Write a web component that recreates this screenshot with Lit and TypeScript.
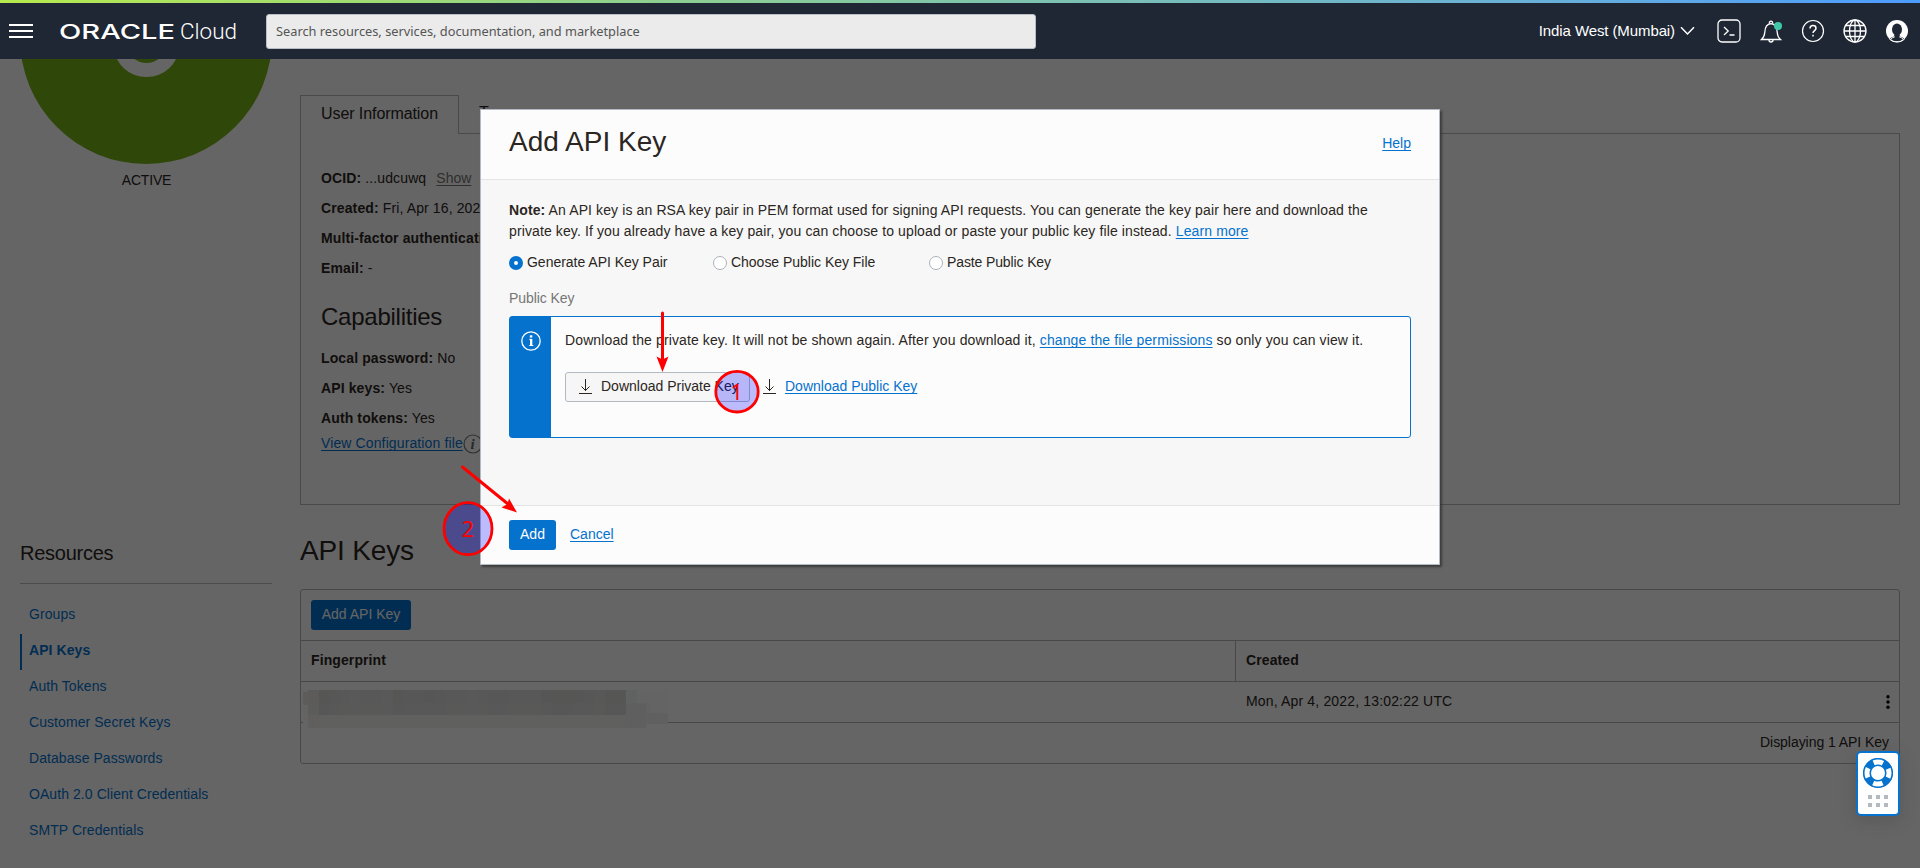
import { LitElement, html, css, svg } from "lit";
import { customElement } from "lit/decorators.js";
import { classMap } from "lit/directives/class-map.js";

const FONT = css`"Liberation Sans", Arial, sans-serif`;

@customElement("top-bar")
class TopBar extends LitElement {
  static styles = css`
    :host { display: block; height: 59px; color: #fff; font-family: ${FONT}; }
    .stripe { height: 3px; background: linear-gradient(90deg, #b6ea4e 0%, #8fd08f 33%, #68b0d8 80%, #4c9cff 100%); }
    .bar { height: 56px; background: #1e2733; display: flex; align-items: center; padding: 0 11px 0 9px; }
    svg { display: block; flex: none; }
    .menu { margin-right: 26px; }
    .logo { margin-right: 26px; }
    .search { width: 759px; height: 33px; border: 1px solid #b9bec6; border-radius: 3px; background: #ebebeb;
      display: flex; align-items: center; padding-left: 9px;
      font: 12.8px "Noto Sans", "Open Sans", sans-serif; color: #555; }
    .region { margin-left: auto; font-size: 15px; letter-spacing: -0.1px; white-space: nowrap; margin-right: 5px; padding-bottom: 1px; }
    .chev { margin-right: 22px; }
    .icons { display: flex; align-items: center; gap: 18px; }
  `;
  render() {
    return html`
      <div class="stripe"></div>
      <div class="bar">
        <svg class="menu" width="24" height="14" viewBox="0 0 24 14" fill="#fff">
          <rect y="0" width="24" height="2" /><rect y="6" width="24" height="2" /><rect y="12" width="24" height="2" />
        </svg>
        <svg class="logo" width="181" height="24" viewBox="0 0 181 24" fill="#fff">
          <text x="0" y="19.900" font-family="Inter, sans-serif" font-size="20.500" font-weight="500" textLength="116" lengthAdjust="spacingAndGlyphs">ORACLE</text>
          <text x="121" y="19.900" font-family="Roboto, sans-serif" font-size="22" font-weight="300" textLength="57" lengthAdjust="spacingAndGlyphs">Cloud</text>
        </svg>
        <div class="search">Search resources, services, documentation, and marketplace</div>
        <span class="region">India West (Mumbai)</span>
        <svg class="chev" width="15" height="10" viewBox="0 0 15 10" fill="none" stroke="#fff" stroke-width="1.500"><path d="M1 1.200 7.500 8 14 1.200" /></svg>
        <div class="icons">
          <svg width="24" height="24" viewBox="0 0 24 24" fill="none" stroke="#fff" stroke-width="1.300">
            <rect x="1" y="1" width="22" height="22" rx="4" /><path d="M7 8 11.200 12 7 16M12.500 16h5" />
          </svg>
          <svg width="24" height="24" viewBox="-1 0 24 24" fill="none" stroke="#fff" stroke-width="1.300">
            <path d="M1.500 20.500c2-1.700 3-3.500 3.300-7.200C5 8 7.500 5 11 4.700c3.500.300 6 3.300 6.200 8.600.3 3.700 1.300 5.500 3.300 7.200zM9.500 4.300a1.600 1.600 0 1 1 3 0M9 21a2 2 0 0 0 4 0" />
            <circle cx="18" cy="7" r="4" fill="#3fc9a9" stroke="none" />
          </svg>
          <svg width="24" height="24" viewBox="0 0 24 24" fill="none" stroke="#fff" stroke-width="1.200">
            <circle cx="12" cy="12" r="10.500" /><path stroke-width="1.500" d="M9 9.600c0-2 1.300-3 3-3s3 1.100 3 2.700c0 2.200-3 2.400-3 4.800M12 15.800v1.800" />
          </svg>
          <svg width="24" height="24" viewBox="0 0 24 24" fill="none" stroke="#fff" stroke-width="1.300">
            <circle cx="12" cy="12" r="11" /><ellipse cx="12" cy="12" rx="5.500" ry="11" />
            <path d="M12 1v22M1 12h22M2.500 6.500h19M2.500 17.500h19" />
          </svg>
          <svg width="24" height="24" viewBox="0 0 24 24">
            <circle cx="12" cy="12" r="11" fill="#fff" />
            <ellipse cx="12" cy="10.500" rx="5" ry="6" fill="#1e2733" />
            <path d="M9.500 15h5l.5 2.500c2 .500 3.200 1.200 4 2.200A11 11 0 0 1 12 22.200a11 11 0 0 1-7-2.500c.8-1 2-1.700 4-2.200z" fill="#1e2733" />
            <path d="M4.500 20.200a11 11 0 0 0 15 0M6 20c1-1.200 2.500-1.700 3.800-2.200M18 20c-1-1.200-2.500-1.700-3.800-2.200" stroke="#fff" stroke-width="1" fill="none"/>
          </svg>
        </div>
      </div>`;
  }
}

@customElement("side-panel")
class SidePanel extends LitElement {
  static styles = css`
    :host { display: block; width: 252px; padding-left: 20px; font: 14px ${FONT}; color: #2b2622; }
    .crop { height: 105px; overflow: hidden; display: flex; align-items: flex-end; }
    .avatar { flex: none; width: 252px; height: 252px; border-radius: 50%; background: #75b116;
      display: flex; justify-content: center; align-items: flex-end; }
    .ring { width: 65px; height: 62px; box-sizing: border-box; border: 14px solid #fcfcfc; border-radius: 50%; margin-bottom: 87px; margin-left: 1px; }
    .state { text-align: center; line-height: 32px; height: 32px; letter-spacing: -0.2px; padding-left: 1px; }
    h2 { margin: 342px 0 0; font-weight: 400; font-size: 20px; line-height: 30px; height: 45px; letter-spacing: -0.25px; border-bottom: 1px solid #b9bec2; }
    .links { padding-top: 14px; display: flex; flex-direction: column; }
    .link { height: 36px; line-height: 32px; color: #0572ce; border-left: 2px solid transparent; padding-left: 7px; box-sizing: border-box; letter-spacing: 0.07px; }
    .link.on { font-weight: 700; border-color: #0572ce; }
  `;
  render() {
    const links = ["Groups", "API Keys", "Auth Tokens", "Customer Secret Keys", "Database Passwords", "OAuth 2.0 Client Credentials", "SMTP Credentials"];
    return html`
      <div class="crop"><div class="avatar"><div class="ring"></div></div></div>
      <div class="state">ACTIVE</div>
      <h2>Resources</h2>
      <div class="links">
        ${links.map((l) => html`<a class=${classMap({ link: true, on: l === "API Keys" })}>${l}</a>`)}
      </div>`;
  }
}

@customElement("user-details")
class UserDetails extends LitElement {
  static styles = css`
    :host { display: block; height: 410px; margin-top: 36px; font: 14px ${FONT}; color: #2b2622; }
    .tabs { display: flex; height: 39px; }
    .tab { font-size: 16px; line-height: 36px; white-space: nowrap; }
    .tab.on { box-sizing: border-box; width: 159px; padding-left: 20px; border: 1px solid #b9b9b9; border-bottom: 0; letter-spacing: -0.08px; }
    .tab.off { flex: 1; padding-left: 20px; box-sizing: border-box; border-bottom: 1px solid #b9b9b9; height: 39px; }
    .panel { box-sizing: border-box; height: 371px; border: 1px solid #b9b9b9; border-top: 0; padding: 29px 20px 0; letter-spacing: 0.12px; }
    .row { height: 30px; line-height: 30px; white-space: nowrap; }
    a { text-decoration: underline 1px; text-underline-offset: 2px; text-decoration-skip-ink: none; }
    .show { color: #767676; margin-left: 6px; letter-spacing: 0; }
    h3 { margin: 16px 0 8px; font-weight: 400; font-size: 24px; line-height: 36px; letter-spacing: -0.25px; }
    .cfg { display: flex; align-items: center; height: 20px; }
    .cfg a { color: #0572ce; line-height: 16px; }
    .cfg svg { display: block; margin-top: 2px; }
  `;
  render() {
    return html`
      <div class="tabs"><div class="tab on">User Information</div><div class="tab off">Tags</div></div>
      <div class="panel">
        <div class="row"><b>OCID:</b> ...udcuwq <a class="show">Show</a></div>
        <div class="row"><b>Created:</b> Fri, Apr 16, 2021</div>
        <div class="row"><b>Multi-factor authentication:</b></div>
        <div class="row"><b>Email:</b> -</div>
        <h3>Capabilities</h3>
        <div class="row"><b>Local password:</b> No</div>
        <div class="row"><b>API keys:</b> Yes</div>
        <div class="row"><b>Auth tokens:</b> Yes</div>
        <div class="cfg"><a>View Configuration file</a>
          <svg width="20" height="20" viewBox="0 0 20 20"><circle cx="10" cy="10" r="9" fill="none" stroke="#777" stroke-width="1.200" />
            <text x="7.500" y="15" font-family="Liberation Serif, serif" font-style="italic" font-weight="700" font-size="15" fill="#666">i</text></svg>
        </div>
      </div>`;
  }
}

@customElement("keys-table")
class KeysTable extends LitElement {
  static styles = css`
    :host { display: block; font: 14px ${FONT}; color: #2b2622; }
    h1 { margin: 24px 0 16px; font-weight: 400; font-size: 28px; line-height: 44px; letter-spacing: -0.15px; }
    .box { border: 1px solid #b0b5b8; border-radius: 3px; height: 173px; display: grid; grid-template-rows: 51px 41px 41px 40px; }
    .r { border-bottom: 1px solid #b0b5b8; display: grid; grid-template-columns: 934px 1fr; box-sizing: border-box; }
    .c { padding-left: 10px; line-height: 38px; }
    .c + .c { border-left: 1px solid transparent; }
    .r.head { font-weight: 700; letter-spacing: 0.1px; }
    .r.head .c + .c { border-left-color: #b0b5b8; }
    .tools { display: block; padding: 10px; }
    .btn { display: inline-block; width: 100px; height: 30px; line-height: 28px; text-align: center; background: #0572ce; color: #fcfcfc; border-radius: 3px; }
    .last { display: flex; justify-content: space-between; padding-right: 9px; align-items: center; letter-spacing: 0.16px; }
    .last span { margin-top: -2px; }
    .foot { text-align: right; padding-right: 10px; line-height: 38px; letter-spacing: -0.05px; }
    .smudge { display: block; margin: 8px 0 0 -8px; overflow: visible; }
    .data .c { height: 40px; }
  `;
  render() {
    const top = [91, 89, 91, 92, 93, 92, 92, 93, 89, 91, 91, 90, 91, 92, 92, 93, 92, 91, 91, 92, 92, 92, 90, 89, 89, 90, 91, 92, 89, 89];
    const g = (n: number) => { const v = Math.round(n * 2.4); return `rgb(${v},${v},${v - 1})`; };
    return html`
      <h1>API Keys</h1>
      <div class="box">
        <div class="r tools"><span class="btn">Add API Key</span></div>
        <div class="r head"><div class="c">Fingerprint</div><div class="c">Created</div></div>
        <div class="r data">
          <div class="c">
            <svg class="smudge" width="366" height="38" viewBox="0 0 366 38" shape-rendering="crispEdges">
              <rect width="365" height="34" y="0" fill="#fafafa" />
              <rect x="0" y="2" width="6" height="13" fill="#e8e6e2" />
              <rect x="5" y="25" width="338" height="13" fill="#efefee" />
              <rect x="333" y="13" width="15" height="20" fill="#f4f4f4" />
              <rect x="322" y="13" width="21" height="25" fill="#ededed" />
              <rect x="343" y="23" width="22" height="11" fill="#f0f0f0" />
              <rect x="322" y="0" width="12" height="13" fill="#f1f3f3" />
              ${top.map((v, i) => svg`<rect x=${5 + i * 10.600} y="0" width="10.800" height="13" fill=${g(v)} /><rect x=${5 + i * 10.600} y="13" width="10.800" height="12" fill=${g(v * 0.5 + 46.500)} />`)}
              <rect x="5" y="0" width="11" height="38" fill="#efeeea" opacity=".5" />
            </svg>
          </div>
          <div class="c last"><span>Mon, Apr 4, 2022, 13:02:22 UTC</span>
            <svg width="4" height="14" viewBox="0 0 4 14" fill="#000"><circle cx="2" cy="1.800" r="1.700" /><circle cx="2" cy="7" r="1.700" /><circle cx="2" cy="12.200" r="1.700" /></svg></div>
        </div>
        <div class="foot">Displaying 1 API Key</div>
      </div>`;
  }
}

@customElement("api-key-dialog")
class ApiKeyDialog extends LitElement {
  static styles = css`
    :host { display: flex; flex-direction: column; box-sizing: border-box; width: 960px; height: 456px; background: #fcfcfc; border: 1px solid #b3bac4;
      box-shadow: 2px 2px 2px rgba(40, 45, 40, .7); font: 14px ${FONT}; color: #2b2622; }
    a { color: #0572ce; text-decoration: underline 1px; text-underline-offset: 2px; text-decoration-skip-ink: none; }
    .head { height: 69px; flex: none; display: flex; justify-content: space-between; padding: 0 28px; border-bottom: 1px solid #e4e4e4; }
    h1 { margin: 0; font-weight: 400; font-size: 28px; line-height: 63px; letter-spacing: 0; }
    .head a { margin-top: 26px; line-height: 15px; height: 15px; }
    .body { flex: 1; background: #f7f7f7; padding: 20px 28px 0; }
    p { margin: 0; line-height: 21px; white-space: nowrap; letter-spacing: 0.115px; }
    .radios { display: flex; height: 20px; margin-top: 10px; }
    .radio { display: flex; align-items: center; white-space: nowrap; gap: 4px; line-height: 20px; letter-spacing: -0.02px; }
    .radio:nth-child(1) { width: 204px; } .radio:nth-child(2) { width: 216px; }
    .radio:nth-child(3) { letter-spacing: -0.12px; }
    .dot { width: 14px; height: 14px; box-sizing: border-box; border-radius: 50%; border: 1px solid #aab1ba; background: #fff; margin-top: 1px; }
    .dot.on { border: 5px solid #0572ce; }
    .label { color: #767676; line-height: 20px; margin-top: 16px; letter-spacing: -0.08px; }
    .note { box-sizing: border-box; margin-top: 8px; height: 122px; border: 1px solid #0572ce; border-radius: 3px; background: #fcfcfc; display: flex; }
    .side { width: 41px; background: #0572ce; display: flex; justify-content: center; padding-top: 14px; box-sizing: border-box; }
    .side svg, .dl svg { display: block; flex: none; }
    .msg { padding: 12px 0 0 14px; white-space: nowrap; }
    .line { line-height: 22px; letter-spacing: 0.115px; }
    .acts { display: flex; margin-top: 21px; height: 30px; align-items: center; }
    .dl { display: flex; align-items: center; gap: 9px; }
    .dl.btn { box-sizing: border-box; width: 185px; height: 30px; border: 1px solid #b3b9c3; border-radius: 3px; background: #f6f6f6; padding-left: 13px; margin-right: 13px; }
    .dl span, .dl a { line-height: 15px; margin-top: -1px; }
    .foot { height: 59px; flex: none; border-top: 1px solid #e4e4e4; display: flex; padding: 14px 28px 0; box-sizing: border-box; gap: 14px; }
    .add { width: 47px; height: 30px; line-height: 28px; text-align: center; background: #0572ce; color: #fcfcfc; border-radius: 3px; }
    .foot a { line-height: 15px; height: 15px; margin-top: 7px; }
  `;
  render() {
    const icon = html`<svg width="13" height="16" viewBox="0 0 13 16" fill="none" stroke="#2b2622" stroke-width="1"><path d="M6.500 0v12M2.500 7.500 6.500 11.500 10.500 7.500M0 14.500h13" /></svg>`;
    const opts = ["Generate API Key Pair", "Choose Public Key File", "Paste Public Key"];
    return html`
      <div class="head"><h1>Add API Key</h1><a>Help</a></div>
      <div class="body">
        <p><b>Note:</b> An API key is an RSA key pair in PEM format used for signing API requests. You can generate the key pair here and download the<br />private key. If you already have a key pair, you can choose to upload or paste your public key file instead. <a>Learn more</a></p>
        <div class="radios">${opts.map((o, i) => html`<div class="radio"><i class=${classMap({ dot: true, on: i === 0 })}></i>${o}</div>`)}</div>
        <div class="label">Public Key</div>
        <div class="note">
          <div class="side"><svg width="20" height="20" viewBox="0 0 20 20"><circle cx="10" cy="10" r="9.200" fill="none" stroke="#fff" stroke-width="1.300" /><path d="M8.300 8.300h2.200v6.200M8.300 14.500h4" stroke="#fff" stroke-width="1" fill="none" /><rect x="9" y="8" width="2.300" height="6.500" fill="#fff" /><rect x="8.800" y="4.300" width="2.500" height="2.200" fill="#fff" /></svg></div>
          <div class="msg">
            <div class="line">Download the private key. It will not be shown again. After you download it, <a>change the file permissions</a> so only you can view it.</div>
            <div class="acts">
              <div class="dl btn">${icon}<span>Download Private Key</span></div>
              <div class="dl">${icon}<a>Download Public Key</a></div>
            </div>
          </div>
        </div>
      </div>
      <div class="foot"><div class="add">Add</div><a>Cancel</a></div>`;
  }
}

@customElement("app-root")
class AppRoot extends LitElement {
  static styles = css`
    :host { display: block; position: relative; width: 1920px; height: 868px; overflow: hidden; background: #fcfcfc; }
    .main { display: flex; gap: 28px; height: 809px; }
    .content { width: 1600px; display: flex; flex-direction: column; }
    .scrim { position: absolute; inset: 59px 0 0 0; background: rgba(0, 0, 0, .6); }
    .dialog { position: absolute; left: 480px; top: 109px; }
    .marks { position: absolute; left: 0; top: 0; }
    .help { position: absolute; left: 1856px; top: 751px; width: 44px; height: 65px; box-sizing: border-box; background: #fff;
      border: 2px solid #0572ce; border-radius: 5px; box-shadow: 0 4px 16px rgba(60, 60, 60, .3); }
    .help svg { display: block; }
  `;
  render() {
    return html`
      <top-bar></top-bar>
      <div class="main">
        <side-panel></side-panel>
        <div class="content"><user-details></user-details><keys-table></keys-table></div>
      </div>
      <div class="scrim"></div>
      <api-key-dialog class="dialog"></api-key-dialog>
      <div class="help">
        <svg width="40" height="61" viewBox="0 0 40 61">
          <circle cx="20" cy="20" r="11" fill="none" stroke="#0572ce" stroke-width="8" />
          <circle cx="20" cy="20" r="14.500" fill="none" stroke="#0572ce" stroke-width="1" />
          <circle cx="20" cy="20" r="11" fill="none" stroke="#fff" stroke-width="5" stroke-dasharray="9.600 7.680" stroke-dashoffset="4.800" />
          ${[12, 20, 28].map((x) => [43, 51].map((y) => svg`<rect x=${x - 2} y=${y - 1} width="4" height="4" fill="#b3b9bf" />`))}
        </svg>
      </div>
      <svg class="marks" width="1920" height="868" viewBox="0 0 1920 868">
        <g stroke="#f00" stroke-width="2.800" fill="rgba(0,0,255,.26)">
          <ellipse cx="737" cy="391.700" rx="21.200" ry="20.300" />
          <ellipse cx="468" cy="528.700" rx="24" ry="26" />
        </g>
        <g stroke="#f00" stroke-width="3" stroke-linecap="round">
          <path d="M662.500 313V360M462.500 467 508 504" />
        </g>
        <g fill="#f00">
          <path d="M662.500 372 656.500 356.500 662.500 359.500 668.500 356.500z" />
          <path d="M517 512.500 501.500 507.500 507.500 504 509 498.500z" />
          <text x="730.500" y="400" font-family="Noto Sans, sans-serif" font-size="22">1</text>
          <text x="461.500" y="537" font-family="Noto Sans, sans-serif" font-size="22">2</text>
        </g>
      </svg>`;
  }
}
